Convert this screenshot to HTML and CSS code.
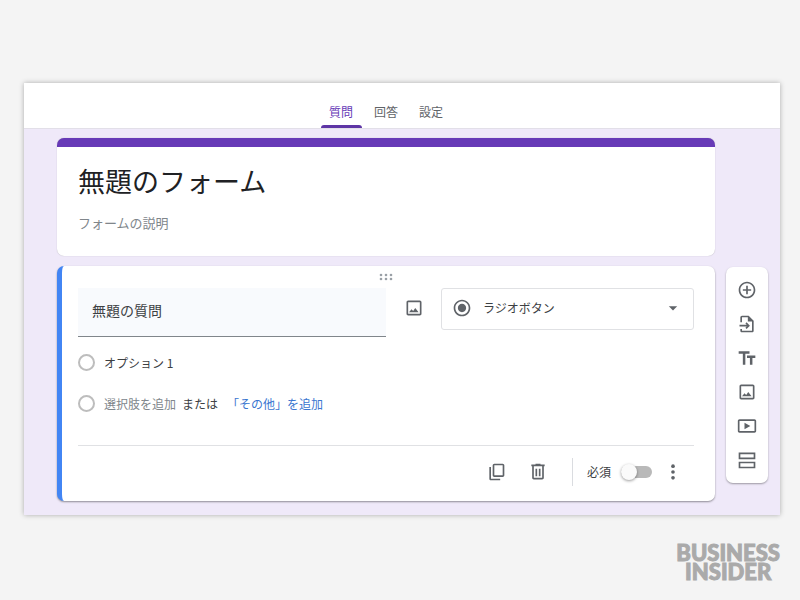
FILE: index.html
```html
<!DOCTYPE html>
<html lang="ja">
<head>
    <meta charset="UTF-8">
    <meta name="viewport" content="width=device-width, initial-scale=1.0">
    <title>無題のフォーム</title>
    <link rel="stylesheet" href="styles.css">
</head>
<body>
    <div class="window">
        <nav class="tabs">
            <button class="tab active" type="button">質問</button>
            <button class="tab" type="button">回答</button>
            <button class="tab" type="button">設定</button>
        </nav>

        <main class="editor">
            <div class="cards">
                <section class="card title-card">
                    <input class="form-title" type="text" value="無題のフォーム" aria-label="フォームのタイトル">
                    <input class="form-description" type="text" placeholder="フォームの説明" aria-label="フォームの説明">
                </section>

                <section class="card question-card">
                    <svg class="drag-handle" viewBox="0 0 14 8" width="14" height="8">
                        <circle cx="2" cy="2" r="1.3"/><circle cx="7" cy="2" r="1.3"/><circle cx="12" cy="2" r="1.3"/>
                        <circle cx="2" cy="6" r="1.3"/><circle cx="7" cy="6" r="1.3"/><circle cx="12" cy="6" r="1.3"/>
                    </svg>

                    <div class="question-row">
                        <input class="question-input" type="text" value="無題の質問" aria-label="質問">
                        <button class="icon-btn image-btn" type="button" aria-label="画像を追加">
                            <svg viewBox="0 0 24 24" width="20" height="20"><path d="M19 5v14H5V5h14m0-2H5c-1.1 0-2 .9-2 2v14c0 1.1.9 2 2 2h14c1.1 0 2-.9 2-2V5c0-1.1-.9-2-2-2zM6 17l3-3.5 2 2 2.5-3.5 4 5z"/></svg>
                        </button>
                        <div class="type-select">
                            <svg viewBox="0 0 24 24" width="20" height="20"><path d="M12 7c-2.76 0-5 2.24-5 5s2.24 5 5 5 5-2.24 5-5-2.24-5-5-5zm0-5C6.48 2 2 6.48 2 12s4.48 10 10 10 10-4.48 10-10S17.52 2 12 2zm0 18c-4.42 0-8-3.58-8-8s3.58-8 8-8 8 3.58 8 8-3.58 8-8 8z"/></svg>
                            <select aria-label="質問の種類">
                                <option>ラジオボタン</option>
                                <option>チェックボックス</option>
                                <option>プルダウン</option>
                            </select>
                            <svg viewBox="0 0 24 24" width="20" height="20"><path d="M7 10l5 5 5-5z"/></svg>
                        </div>
                    </div>

                    <div class="options">
                        <div class="option">
                            <input type="radio" id="option1" name="option">
                            <label for="option1">オプション 1</label>
                        </div>
                        <div class="option">
                            <input type="radio" id="option2" name="option">
                            <label class="muted" for="option2">選択肢を追加</label>
                            <span class="or">または</span>
                            <a class="add-other" href="#">「その他」を追加</a>
                        </div>
                    </div>

                    <div class="question-footer">
                        <button class="icon-btn" type="button" aria-label="コピーを作成">
                            <svg viewBox="0 0 24 24" width="20" height="20"><path d="M20 2H10c-1.1 0-2 .9-2 2v12c0 1.1.9 2 2 2h10c1.1 0 2-.9 2-2V4c0-1.1-.9-2-2-2zm0 14H10V4h10v12zM6 6H4v14c0 1.1.9 2 2 2h11v-2H6V6z"/></svg>
                        </button>
                        <button class="icon-btn" type="button" aria-label="削除">
                            <svg viewBox="0 0 24 24" width="20" height="20"><path d="M15 3V2H9v1H4v2h1v14c0 1.1.9 2 2 2h10c1.1 0 2-.9 2-2V5h1V3h-5zm2 16H7V5h10v14zM9 8h2v9H9zm4 0h2v9h-2z"/></svg>
                        </button>
                        <div class="required">
                            <label for="required">必須</label>
                            <input class="toggle" type="checkbox" id="required">
                        </div>
                        <button class="icon-btn" type="button" aria-label="その他のオプション">
                            <svg viewBox="0 0 24 24" width="20" height="20"><circle cx="12" cy="5" r="2.2"/><circle cx="12" cy="12" r="2.2"/><circle cx="12" cy="19" r="2.2"/></svg>
                        </button>
                    </div>
                </section>
            </div>

            <aside class="toolbar">
                <button class="icon-btn" type="button" aria-label="質問を追加">
                    <svg viewBox="0 0 24 24" width="20" height="20"><path d="M13 7h-2v4H7v2h4v4h2v-4h4v-2h-4V7zm-1-5C6.48 2 2 6.48 2 12s4.48 10 10 10 10-4.48 10-10S17.52 2 12 2zm0 18c-4.41 0-8-3.59-8-8s3.59-8 8-8 8 3.59 8 8-3.59 8-8 8z"/></svg>
                </button>
                <button class="icon-btn" type="button" aria-label="質問をインポート">
                    <svg viewBox="0 0 24 24" width="20" height="20"><path d="M14 2H6c-1.1 0-2 .9-2 2v6h2V4h7v5h5v11H6v-2H4v2c0 1.1.9 2 2 2h12c1.1 0 2-.9 2-2V8l-6-6zM11.5 10l-1.400 1.400 1.600 1.600H3v2h8.700l-1.600 1.600 1.400 1.400 4-4z"/></svg>
                </button>
                <button class="icon-btn" type="button" aria-label="タイトルと説明を追加">
                    <svg viewBox="0 0 24 24" width="20" height="20"><path d="M2 4v3h5v13h3V7h5V4H2zM12 9v3h3.5v8h3v-8H22V9z"/></svg>
                </button>
                <button class="icon-btn" type="button" aria-label="画像を追加">
                    <svg viewBox="0 0 24 24" width="20" height="20"><path d="M19 5v14H5V5h14m0-2H5c-1.1 0-2 .9-2 2v14c0 1.1.9 2 2 2h14c1.1 0 2-.9 2-2V5c0-1.1-.9-2-2-2zM6 17l3-3.5 2 2 2.5-3.5 4 5z"/></svg>
                </button>
                <button class="icon-btn" type="button" aria-label="動画を追加">
                    <svg viewBox="0 0 24 24" width="20" height="20"><path d="M9 8v8l7-4zM21 4H3c-1.1 0-2 .9-2 2v12c0 1.1.9 2 2 2h18c1.1 0 2-.9 2-2V6c0-1.1-.9-2-2-2zm0 14H3V6h18v12z"/></svg>
                </button>
                <button class="icon-btn" type="button" aria-label="セクションを追加">
                    <svg viewBox="0 0 24 24" width="20" height="20"><path d="M2 3v8h20V3H2zm18 6H4V5h16v4zM2 14v8h20v-8H2zm18 6H4v-4h16v4z"/></svg>
                </button>
            </aside>
        </main>
    </div>

    <footer class="brand">
        <span>BUSINESS</span>
        <span>INSIDER</span>
    </footer>
</body>
</html>
```
FILE: styles.css
```css
* {
    box-sizing: border-box;
}

body {
    margin: 0;
    padding: 83px 20px 0 24px;
    background-color: #f4f4f4;
    color: #3c4043;
    font-family: "Noto Sans CJK JP", sans-serif;
    font-size: 12px;
    line-height: 20px;
}

button,
input,
select {
    font: inherit;
    color: inherit;
    margin: 0;
    padding: 0;
    border: none;
    background: none;
}

svg {
    display: block;
    flex: none;
    fill: #5f6368;
}

.window {
    background-color: #efe9f9;
    box-shadow: 0 0 5px rgba(0, 0, 0, 0.3);
}

/* Tabs */
.tabs {
    display: flex;
    justify-content: center;
    gap: 4px;
    height: 46px;
    padding: 12px 32px 0 0;
    background-color: #fff;
    border-bottom: 1px solid #e2dfe8;
}

.tab {
    width: 41px;
    padding-top: 4px;
    border-bottom: 3px solid transparent;
    color: #5f6368;
}

.tab.active {
    color: #673ab7;
    position: relative;
}

.tab.active::after {
    content: "";
    position: absolute;
    left: 0;
    right: 0;
    bottom: -3px;
    height: 3px;
    border-radius: 3px 3px 0 0;
    background-color: #5e35a5;
}

/* Cards */
.editor {
    display: flex;
    align-items: flex-end;
    gap: 11px;
    padding: 9px 12px 14px 33px;
}

.cards {
    flex: 1;
    display: flex;
    flex-direction: column;
    gap: 10px;
}

.card {
    background-color: #fff;
    border-radius: 7px;
}

.title-card {
    display: flex;
    flex-direction: column;
    padding: 14px 21px 23px;
    border-top: 9px solid #673ab7;
    box-shadow: 0 0 1px rgba(0, 0, 0, 0.3);
}

.form-title {
    width: 100%;
    height: 40px;
    color: #202124;
    font-size: 27px;
    line-height: 40px;
}

.form-description {
    width: 100%;
    height: 20px;
    margin-top: 12px;
    font-size: 13px;
}

.form-description::placeholder {
    color: #80868b;
    opacity: 1;
}

.question-card {
    padding: 7px 21px 8px 16px;
    border-left: 5px solid #4285f4;
    box-shadow: 0 1px 2px rgba(0, 0, 0, 0.4);
}

.drag-handle {
    margin: 0 auto 7px;
    fill: #9aa0a6;
}

.question-row {
    display: flex;
    align-items: flex-start;
}

.question-input {
    flex: 1;
    min-width: 0;
    height: 49px;
    padding: 0 14px 4px;
    background-color: #f8fafd;
    border-bottom: 1px solid #80868b;
    color: #3c4043;
    font-size: 14px;
}

.icon-btn {
    display: flex;
    align-items: center;
    justify-content: center;
    width: 42px;
    height: 34px;
    cursor: pointer;
}

.image-btn {
    width: 55px;
    height: 40px;
}

.type-select {
    display: flex;
    align-items: center;
    gap: 11px;
    flex: 0 1 253px;
    height: 42px;
    padding: 0 10px 2px;
    border: 1px solid #e0e1e4;
    border-radius: 3px;
}

.type-select select {
    flex: 1;
    appearance: none;
}

/* Answer options */
.options {
    display: flex;
    flex-direction: column;
    gap: 20px;
    padding: 15px 0 31px;
}

.option {
    display: flex;
    align-items: center;
    height: 21px;
}

.option input {
    appearance: none;
    width: 17px;
    height: 17px;
    margin-right: 9px;
    border: 2px solid #bdbdbd;
    border-radius: 50%;
}

.option input:checked {
    border: 5px solid #673ab7;
}

.muted {
    color: #80868b;
}

.or {
    margin: 0 9px 0 6px;
}

.add-other {
    color: #3a76d0;
    text-decoration: none;
}

.question-footer {
    display: flex;
    align-items: center;
    justify-content: flex-end;
    height: 48px;
    padding-top: 4px;
    border-top: 1px solid #e0e1e4;
}

.required {
    display: flex;
    align-items: center;
    gap: 10px;
    height: 28px;
    margin-left: 13px;
    padding-left: 14px;
    border-left: 1px solid #dadce0;
}

.toggle {
    appearance: none;
    position: relative;
    width: 31px;
    height: 12px;
    border-radius: 6px;
    background-color: #b9b9b9;
}

.toggle::before {
    content: "";
    position: absolute;
    top: -2px;
    left: 0;
    width: 16px;
    height: 16px;
    border-radius: 50%;
    background-color: #fafafa;
    box-shadow: 0 1px 3px rgba(0, 0, 0, 0.4);
}

.toggle:checked::before {
    left: 15px;
    background-color: #673ab7;
}

/* Floating toolbar */
.toolbar {
    margin-bottom: 18px;
    padding: 6px 0;
    background-color: #fff;
    border-radius: 7px;
    box-shadow: 0 1px 2px rgba(0, 0, 0, 0.35);
}

.brand {
    display: flex;
    flex-direction: column;
    align-items: center;
    width: fit-content;
    margin: 28px 0 0 auto;
    color: #aaa;
    font-family: Lato, sans-serif;
    font-size: 22px;
    font-weight: 900;
    line-height: 19px;
    -webkit-text-stroke: 1px #aaa;
}
```
